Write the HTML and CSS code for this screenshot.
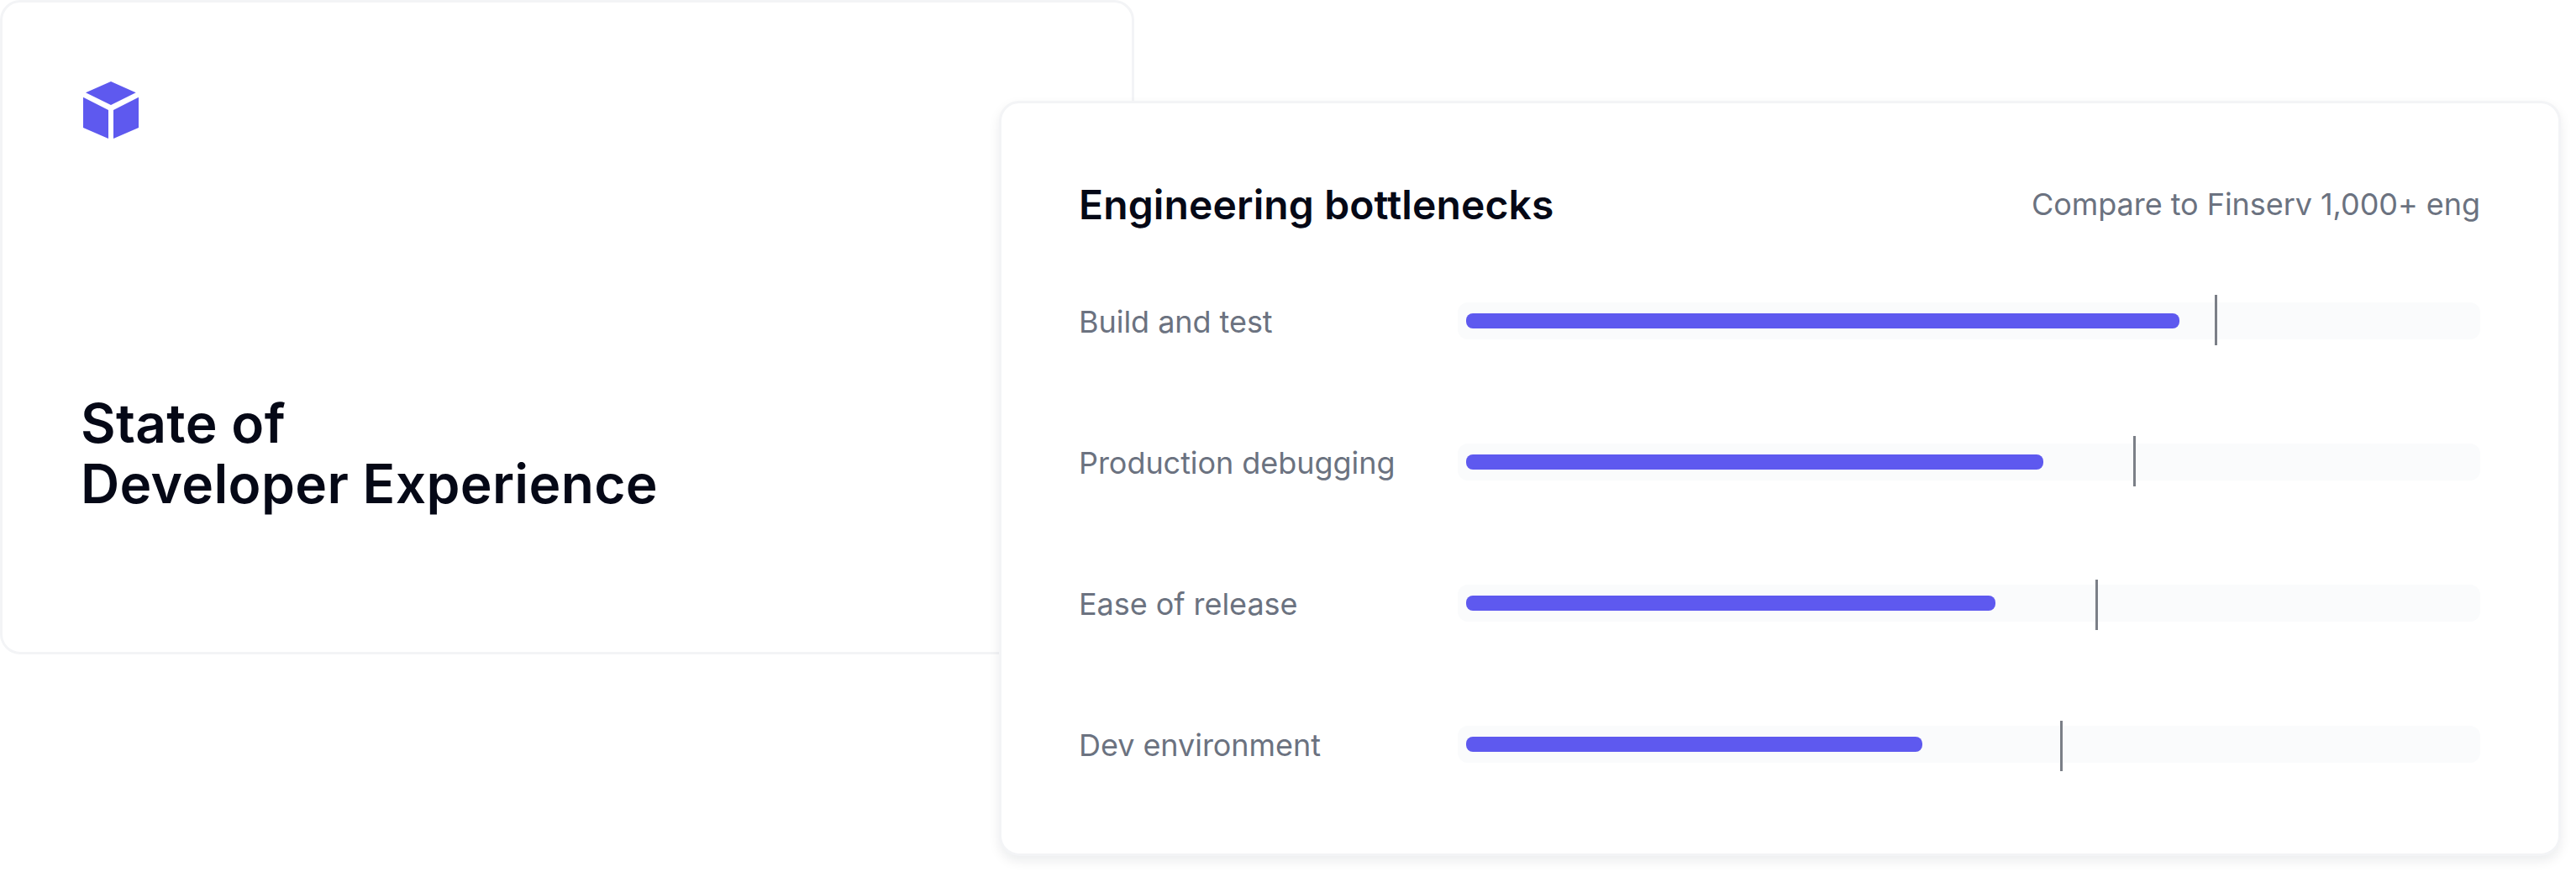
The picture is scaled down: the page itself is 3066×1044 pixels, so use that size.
FILE: index.html
```html
<!DOCTYPE html>
<html lang="en">
<head>
<meta charset="utf-8">
<title>State of Developer Experience</title>
<link rel="stylesheet" href="styles.css">
</head>
<body>
<main class="stage">
  <section class="intro-card">
    <svg class="logo" width="66" height="68" viewBox="0 0 66 68" aria-hidden="true">
      <path d="M33 0 L62.700 13.300 L33 28 L3 13.300 Z M0 18.700 L30 34 L30 68 L0 55 Z M36 34 L66 18.700 L66 55 L36 68 Z" fill="#5e59ef"/>
    </svg>
    <h1 class="intro-title">State of<br>Developer Experience</h1>
  </section>
  <section class="chart-card">
    <header class="chart-head">
      <h2 class="chart-title">Engineering bottlenecks</h2>
      <span class="chart-compare">Compare to Finserv 1,000+ eng</span>
    </header>
    <div class="chart-rows">
      <div class="row">
        <span class="row-label">Build and test</span>
        <div class="track"><div class="fill" style="width:849px"></div><div class="mark" style="left:901px;top:-9px"></div></div>
      </div>
      <div class="row">
        <span class="row-label">Production debugging</span>
        <div class="track"><div class="fill" style="width:687px"></div><div class="mark" style="left:804px;top:-9px"></div></div>
      </div>
      <div class="row">
        <span class="row-label">Ease of release</span>
        <div class="track"><div class="fill" style="width:630px"></div><div class="mark" style="left:759px;top:-6px"></div></div>
      </div>
      <div class="row">
        <span class="row-label">Dev environment</span>
        <div class="track"><div class="fill" style="width:543px"></div><div class="mark" style="left:717px;top:-6px"></div></div>
      </div>
    </div>
  </section>
</main>
</body>
</html>
```
FILE: styles.css
```css
* { box-sizing: border-box; }
html, body { margin: 0; padding: 0; background: #fff; }
body { font-family: Inter, "Liberation Sans", sans-serif; overflow: hidden; }
.stage { position: relative; width: 3066px; height: 1044px; }
.intro-card {
  width: 1350px; height: 779px;
  border: 3px solid #f3f4f6; border-radius: 24px;
  padding: 94px 93px 164px;
  background: #fff;
  display: flex; flex-direction: column; justify-content: space-between;
}
.logo { display: block; margin-left: 3px; }
.intro-title { margin: 0; font-size: 64px; line-height: 72px; font-weight: 600; color: #050816; letter-spacing: 0.35px; }
.chart-card {
  position: absolute; left: 1189px; top: 120px; width: 1859px; height: 899px;
  border: 3px solid #f3f4f6; border-radius: 24px;
  background: #fff;
  box-shadow: 0 6px 14px rgba(17, 24, 39, 0.08);
  padding: 90px 93px 0 92px;
}
.chart-head { display: flex; justify-content: space-between; align-items: center; height: 60px; }
.chart-title { margin: 0; font-size: 48px; font-weight: 600; color: #050816; letter-spacing: 0.12px; }
.chart-compare { font-size: 36px; color: #6b7280; letter-spacing: -0.05px; }
.chart-rows { display: flex; flex-direction: column; gap: 124px; margin-top: 87px; }
.row { display: flex; align-items: center; height: 44px; }
.row-label { width: 451px; font-size: 36px; padding-top: 2px; color: #6b7280; letter-spacing: -0.05px; }
.track { position: relative; flex: 1; height: 44px; background: #fafbfc; border-radius: 12px; }
.fill { position: absolute; left: 10px; top: 13px; height: 18px; background: #5e59ef; border-radius: 8px; }
.mark { position: absolute; width: 3px; height: 60px; background: #7b7f87; }
```
